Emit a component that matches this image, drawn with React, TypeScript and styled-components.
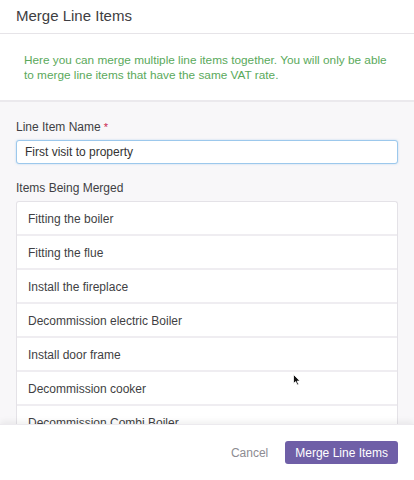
import React from "react";
import styled, { createGlobalStyle } from "styled-components";

const Global = createGlobalStyle`
  html, body { margin: 0; padding: 0; }
  body { font-family: "Liberation Sans", Arial, sans-serif; background: #ffffff; }
  * { box-sizing: border-box; }
`;

const Modal = styled.div`
  position: relative;
  width: 414px;
  height: 480px;
  display: flex;
  flex-direction: column;
  background: #f8f7f9;
  overflow: hidden;
`;

const Header = styled.div`
  height: 34px;
  flex: none;
  display: flex;
  align-items: center;
  padding: 0 16px 2px;
  background: #ffffff;
  border-bottom: 1px solid #e6e4e8;
`;

const Title = styled.h1`
  margin: 0;
  font-size: 15px;
  font-weight: normal;
  color: #3e3e42;
`;

const Info = styled.div`
  flex: none;
  height: 68px;
  padding: 19px 16px 0 24px;
  background: #ffffff;
  border-bottom: 2px solid #ebe9ed;
  color: #5aa95b;
  font-size: 11.8px;
  line-height: 15px;
`;

const Body = styled.div`
  flex: 1;
  min-height: 0;
  overflow: hidden;
  padding: 18px 16px 0;
  display: flex;
  flex-direction: column;
`;

const Label = styled.label`
  display: block;
  flex: none;
  font-size: 12px;
  line-height: 14px;
  color: #3f3f44;
  margin-bottom: 6px;
`;

const Required = styled.span`
  color: #c9254d;
  font-size: 11px;
  vertical-align: top;
  margin-left: 3px;
`;

const Input = styled.input`
  display: block;
  flex: none;
  width: 100%;
  height: 24px;
  padding: 0 8px;
  border: 1px solid #9cc8ec;
  border-radius: 3px;
  box-shadow: 0 0 2px rgba(120, 180, 235, 0.5);
  background: #ffffff;
  font-family: "Liberation Sans", Arial, sans-serif;
  font-size: 12px;
  color: #333;
  outline: none;
  margin-bottom: 17px;
`;

const List = styled.ul`
  list-style: none;
  margin: 0;
  padding: 0;
  flex: none;
  background: #ffffff;
  border: 1px solid #e4e2e7;
  border-bottom: none;
  border-radius: 3px 3px 0 0;
`;

const Row = styled.li`
  height: 34px;
  display: flex;
  align-items: center;
  padding: 2px 11px 0;
  font-size: 12px;
  color: #3f3f44;
  border-bottom: 2px solid #efedf1;
`;

const Footer = styled.div`
  flex: none;
  height: 56px;
  background: #ffffff;
  display: flex;
  align-items: center;
  justify-content: flex-end;
  gap: 17px;
  padding: 0 16px 0;
  box-shadow: 0 -3px 6px rgba(0, 0, 0, 0.06);
  border-top: 1px solid #eceaee;
  position: relative;
  z-index: 1;
`;

const CancelButton = styled.button`
  border: none;
  background: none;
  padding: 0;
  font-family: "Liberation Sans", Arial, sans-serif;
  font-size: 12px;
  color: #8d8c92;
  cursor: pointer;
`;

const PrimaryButton = styled.button`
  height: 23px;
  padding: 0 10px;
  border: none;
  border-radius: 3px;
  background: #6f5fa7;
  color: #ffffff;
  font-family: "Liberation Sans", Arial, sans-serif;
  font-size: 12px;
  cursor: pointer;
`;

const Cursor = styled.svg`
  position: absolute;
  left: 293px;
  top: 374px;
  z-index: 2;
`;

const items = [
  "Fitting the boiler",
  "Fitting the flue",
  "Install the fireplace",
  "Decommission electric Boiler",
  "Install door frame",
  "Decommission cooker",
  "Decommission Combi Boiler",
];

export default function App() {
  return (
    <>
      <Global />
      <Modal>
        <Header>
          <Title>Merge Line Items</Title>
        </Header>
        <Info>
          Here you can merge multiple line items together. You will only be able
          to merge line items that have the same VAT rate.
        </Info>
        <Body>
          <Label>
            Line Item Name<Required>*</Required>
          </Label>
          <Input defaultValue="First visit to property" />
          <Label>Items Being Merged</Label>
          <List>
            {items.map((it) => (
              <Row key={it}>{it}</Row>
            ))}
          </List>
        </Body>
        <Footer>
          <CancelButton>Cancel</CancelButton>
          <PrimaryButton>Merge Line Items</PrimaryButton>
        </Footer>
        <Cursor width="8" height="12" viewBox="0 0 8 12">
          <path d="M0.5 0.5 L0.5 9.5 L2.6 7.6 L4.2 11 L5.6 10.3 L4.1 7.1 L7 7.1 Z" fill="#111" stroke="#fff" strokeWidth="0.8" />
        </Cursor>
      </Modal>
    </>
  );
}
